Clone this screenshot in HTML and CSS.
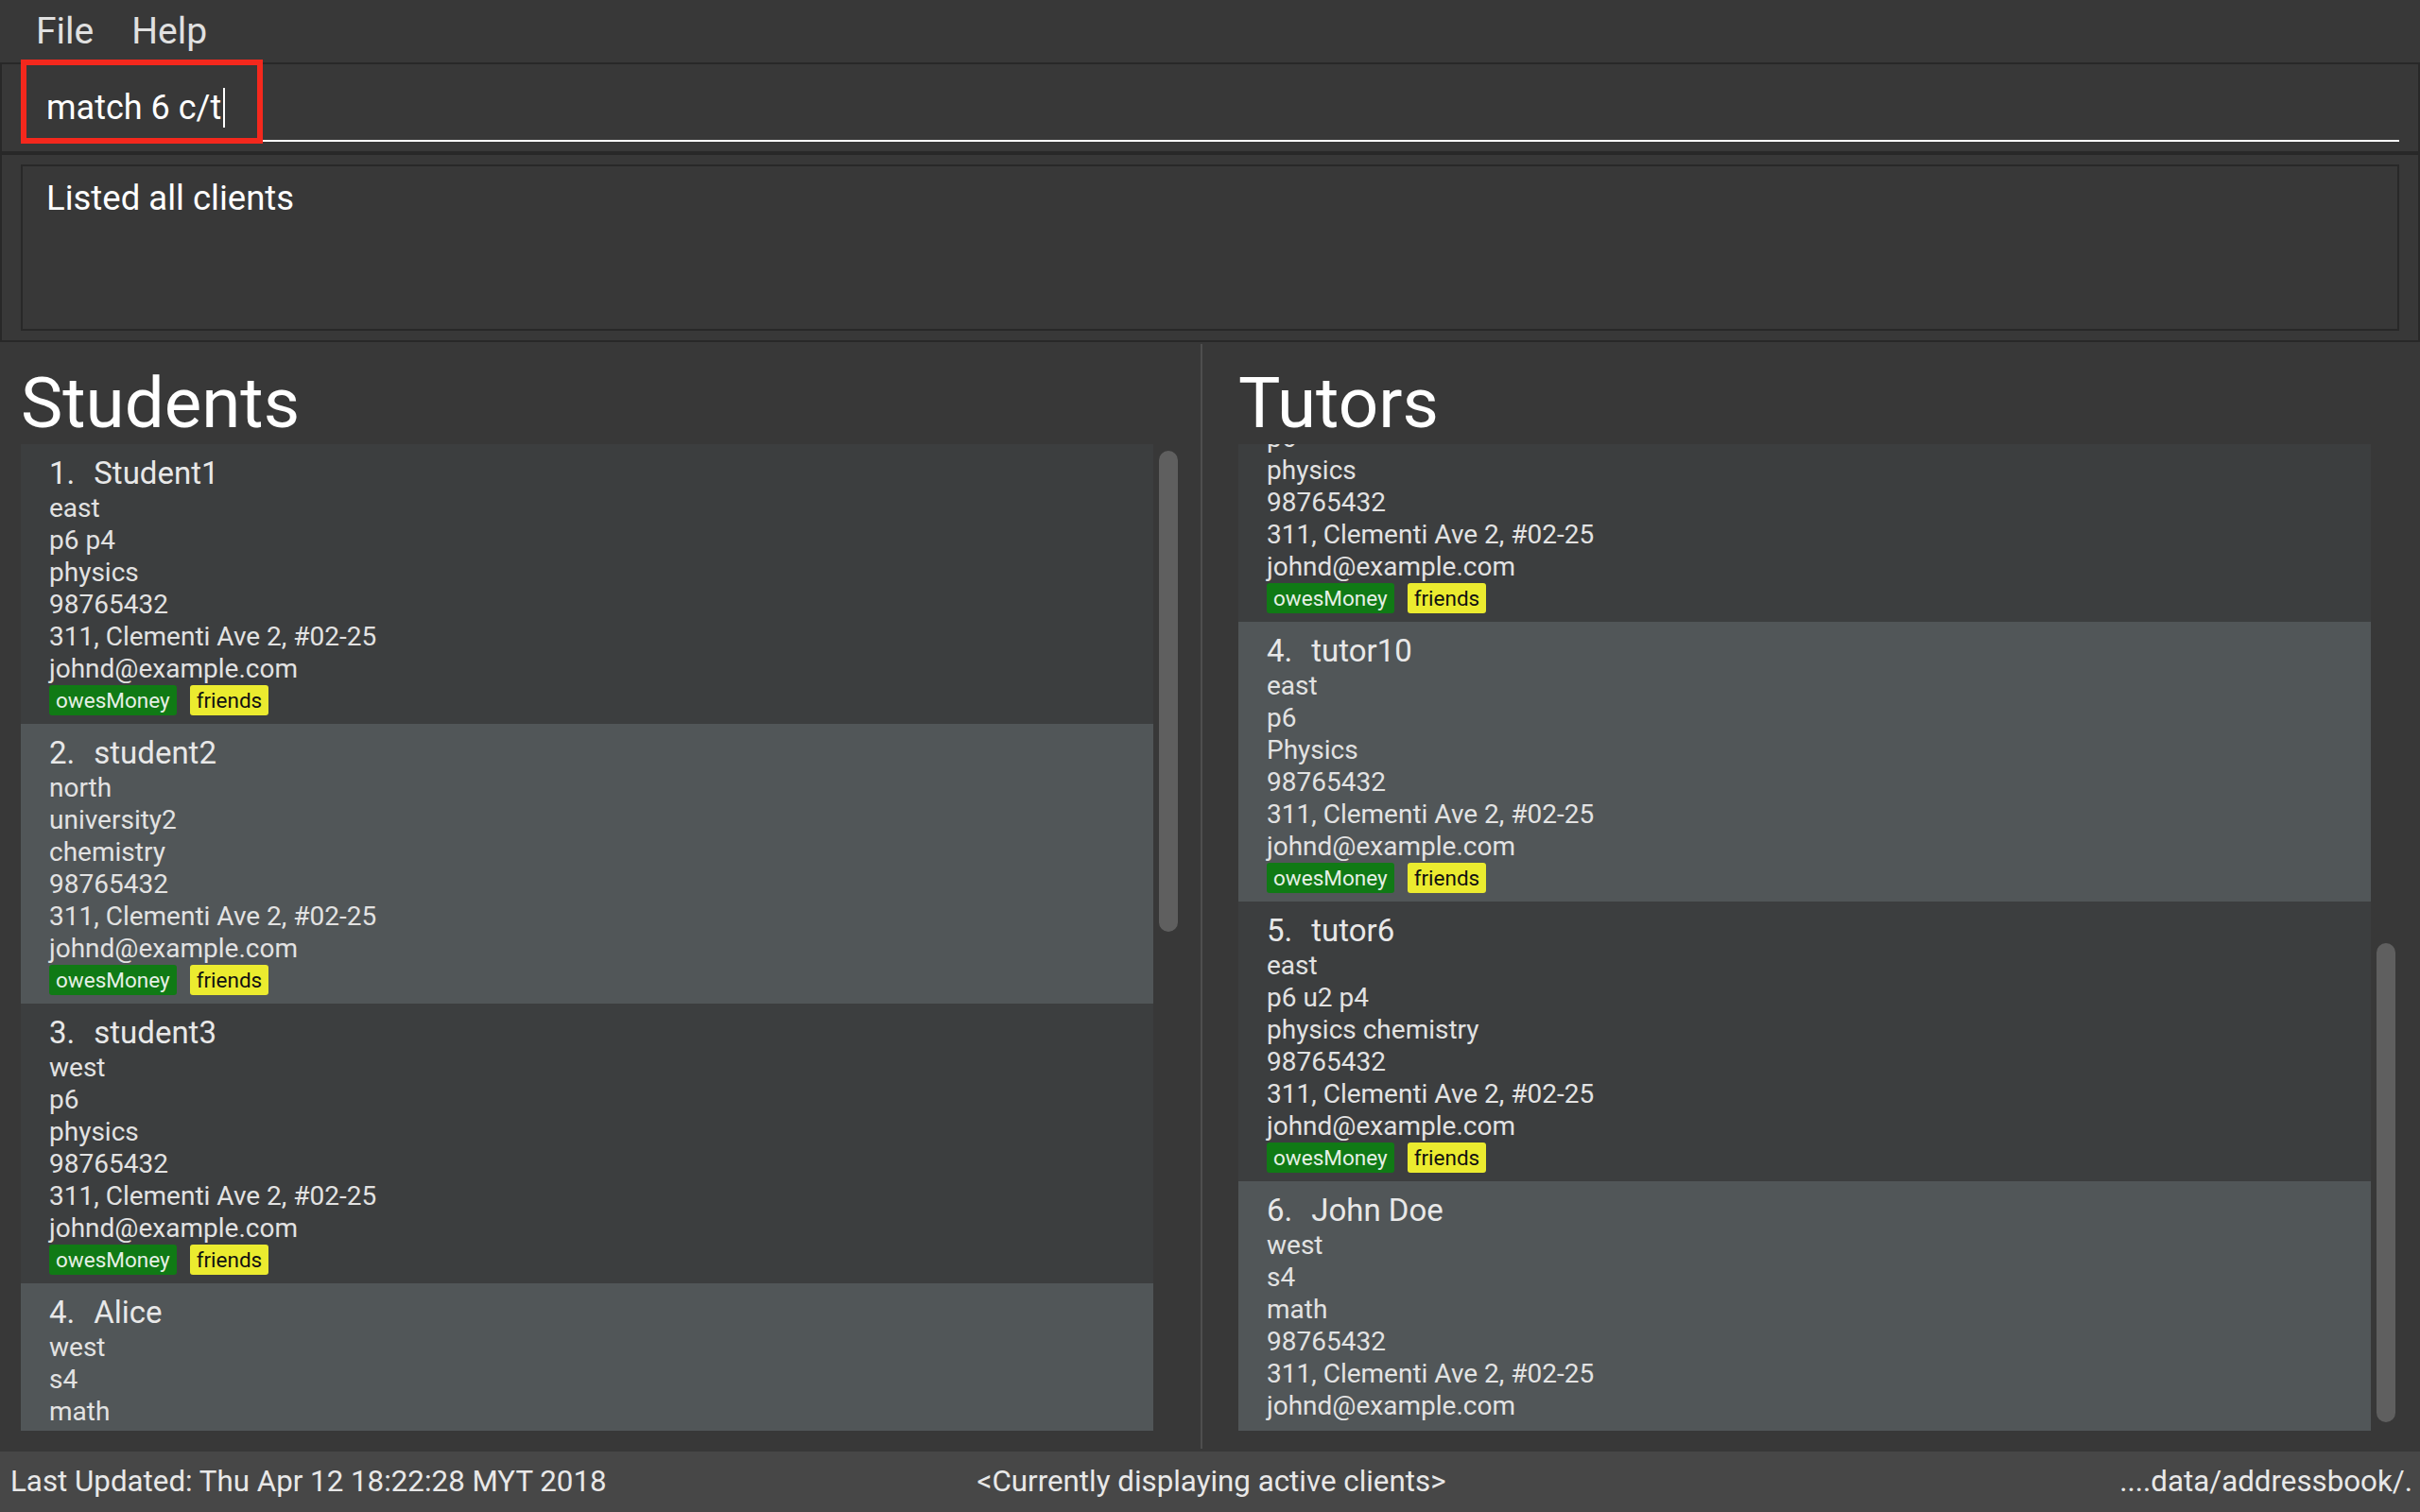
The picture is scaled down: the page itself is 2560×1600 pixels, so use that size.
FILE: index.html
```html
<!DOCTYPE html>
<html lang="en">
<head>
<meta charset="utf-8">
<title>Address App</title>
<link rel="stylesheet" href="styles.css">
</head>
<body>
<div class="app">
  <nav class="menubar">
    <span class="menu-item">File</span>
    <span class="menu-item">Help</span>
  </nav>

  <section class="command-pane">
    <div class="command-field"><span class="command-text">match 6 c/t</span><span class="caret"></span></div>
    <div class="highlight"></div>
  </section>

  <section class="result-pane">
    <div class="result-box">Listed all clients</div>
  </section>

  <main class="lists">
    <section class="pane students">
      <h1 class="pane-title">Students</h1>
      <div class="list-wrap">
        <div class="list">
          <article class="card">
            <div class="card-name"><span class="card-id">1.</span><span>Student1</span></div>
            <div class="card-line">east</div>
            <div class="card-line">p6 p4</div>
            <div class="card-line">physics</div>
            <div class="card-line">98765432</div>
            <div class="card-line">311, Clementi Ave 2, #02-25</div>
            <div class="card-line">johnd@example.com</div>
            <div class="tags"><span class="tag tag-owes">owesMoney</span><span class="tag tag-friends">friends</span></div>
          </article>
          <article class="card">
            <div class="card-name"><span class="card-id">2.</span><span>student2</span></div>
            <div class="card-line">north</div>
            <div class="card-line">university2</div>
            <div class="card-line">chemistry</div>
            <div class="card-line">98765432</div>
            <div class="card-line">311, Clementi Ave 2, #02-25</div>
            <div class="card-line">johnd@example.com</div>
            <div class="tags"><span class="tag tag-owes">owesMoney</span><span class="tag tag-friends">friends</span></div>
          </article>
          <article class="card">
            <div class="card-name"><span class="card-id">3.</span><span>student3</span></div>
            <div class="card-line">west</div>
            <div class="card-line">p6</div>
            <div class="card-line">physics</div>
            <div class="card-line">98765432</div>
            <div class="card-line">311, Clementi Ave 2, #02-25</div>
            <div class="card-line">johnd@example.com</div>
            <div class="tags"><span class="tag tag-owes">owesMoney</span><span class="tag tag-friends">friends</span></div>
          </article>
          <article class="card">
            <div class="card-name"><span class="card-id">4.</span><span>Alice</span></div>
            <div class="card-line">west</div>
            <div class="card-line">s4</div>
            <div class="card-line">math</div>
            <div class="card-line">98765432</div>
            <div class="card-line">311, Clementi Ave 2, #02-25</div>
            <div class="card-line">johnd@example.com</div>
            <div class="tags"><span class="tag tag-owes">owesMoney</span><span class="tag tag-friends">friends</span></div>
          </article>
          <article class="card">
            <div class="card-name"><span class="card-id">5.</span><span>Benson</span></div>
            <div class="card-line">north</div>
            <div class="card-line">s2</div>
            <div class="card-line">english</div>
            <div class="card-line">98765432</div>
            <div class="card-line">311, Clementi Ave 2, #02-25</div>
            <div class="card-line">johnd@example.com</div>
            <div class="tags"><span class="tag tag-owes">owesMoney</span><span class="tag tag-friends">friends</span></div>
          </article>
          <article class="card">
            <div class="card-name"><span class="card-id">6.</span><span>Carl</span></div>
            <div class="card-line">south</div>
            <div class="card-line">j1</div>
            <div class="card-line">biology</div>
            <div class="card-line">98765432</div>
            <div class="card-line">311, Clementi Ave 2, #02-25</div>
            <div class="card-line">johnd@example.com</div>
            <div class="tags"><span class="tag tag-owes">owesMoney</span><span class="tag tag-friends">friends</span></div>
          </article>
          <article class="card">
            <div class="card-name"><span class="card-id">7.</span><span>Daniel</span></div>
            <div class="card-line">central</div>
            <div class="card-line">p5</div>
            <div class="card-line">science</div>
            <div class="card-line">98765432</div>
            <div class="card-line">311, Clementi Ave 2, #02-25</div>
            <div class="card-line">johnd@example.com</div>
            <div class="tags"><span class="tag tag-owes">owesMoney</span><span class="tag tag-friends">friends</span></div>
          </article>
        </div>
        <div class="scrollbar"><div class="thumb"></div></div>
      </div>
    </section>

    <div class="divider"></div>

    <section class="pane tutors">
      <h1 class="pane-title">Tutors</h1>
      <div class="list-wrap">
        <div class="list scrolled-end">
          <article class="card">
            <div class="card-name"><span class="card-id">1.</span><span>tutor1</span></div>
            <div class="card-line">north</div>
            <div class="card-line">p6</div>
            <div class="card-line">math</div>
            <div class="card-line">98765432</div>
            <div class="card-line">311, Clementi Ave 2, #02-25</div>
            <div class="card-line">johnd@example.com</div>
            <div class="tags"><span class="tag tag-owes">owesMoney</span><span class="tag tag-friends">friends</span></div>
          </article>
          <article class="card">
            <div class="card-name"><span class="card-id">2.</span><span>tutor2</span></div>
            <div class="card-line">west</div>
            <div class="card-line">p6</div>
            <div class="card-line">chemistry</div>
            <div class="card-line">98765432</div>
            <div class="card-line">311, Clementi Ave 2, #02-25</div>
            <div class="card-line">johnd@example.com</div>
            <div class="tags"><span class="tag tag-owes">owesMoney</span><span class="tag tag-friends">friends</span></div>
          </article>
          <article class="card">
            <div class="card-name"><span class="card-id">3.</span><span>tutor3</span></div>
            <div class="card-line">east</div>
            <div class="card-line">p6</div>
            <div class="card-line">physics</div>
            <div class="card-line">98765432</div>
            <div class="card-line">311, Clementi Ave 2, #02-25</div>
            <div class="card-line">johnd@example.com</div>
            <div class="tags"><span class="tag tag-owes">owesMoney</span><span class="tag tag-friends">friends</span></div>
          </article>
          <article class="card">
            <div class="card-name"><span class="card-id">4.</span><span>tutor10</span></div>
            <div class="card-line">east</div>
            <div class="card-line">p6</div>
            <div class="card-line">Physics</div>
            <div class="card-line">98765432</div>
            <div class="card-line">311, Clementi Ave 2, #02-25</div>
            <div class="card-line">johnd@example.com</div>
            <div class="tags"><span class="tag tag-owes">owesMoney</span><span class="tag tag-friends">friends</span></div>
          </article>
          <article class="card">
            <div class="card-name"><span class="card-id">5.</span><span>tutor6</span></div>
            <div class="card-line">east</div>
            <div class="card-line">p6 u2 p4</div>
            <div class="card-line">physics chemistry</div>
            <div class="card-line">98765432</div>
            <div class="card-line">311, Clementi Ave 2, #02-25</div>
            <div class="card-line">johnd@example.com</div>
            <div class="tags"><span class="tag tag-owes">owesMoney</span><span class="tag tag-friends">friends</span></div>
          </article>
          <article class="card">
            <div class="card-name"><span class="card-id">6.</span><span>John Doe</span></div>
            <div class="card-line">west</div>
            <div class="card-line">s4</div>
            <div class="card-line">math</div>
            <div class="card-line">98765432</div>
            <div class="card-line">311, Clementi Ave 2, #02-25</div>
            <div class="card-line">johnd@example.com</div>
          </article>
        </div>
        <div class="scrollbar"><div class="thumb"></div></div>
      </div>
    </section>
  </main>

  <footer class="statusbar">
    <span class="status-left">Last Updated: Thu Apr 12 18:22:28 MYT 2018</span>
    <span class="status-center">&lt;Currently displaying active clients&gt;</span>
    <span class="status-right">....data/addressbook/.</span>
  </footer>
</div>
<script src="script.js"></script>
</body>
</html>
```

FILE: styles.css
```css
* {
  box-sizing: border-box;
}

html,
body {
  margin: 0;
  padding: 0;
}

body {
  width: 2560px;
  height: 1600px;
  overflow: hidden;
  background: #383838;
  font-family: Roboto, "Liberation Sans", sans-serif;
  color: #e4e4e4;
}

.app {
  display: flex;
  flex-direction: column;
  height: 1600px;
}

/* Menu bar */
.menubar {
  flex: none;
  height: 66px;
  display: flex;
  align-items: center;
  padding-left: 18px;
}

.menu-item {
  font-size: 39px;
  line-height: 66px;
  padding: 0 20px;
  color: #e0e0e0;
}

/* Command box */
.command-pane {
  position: relative;
  flex: none;
  height: 96px;
  border: 2px solid #282828;
  padding: 12px 20px 10px;
}

.command-field {
  height: 70px;
  border-bottom: 2px solid #ffffff;
  padding-left: 27px;
  font-size: 36px;
  line-height: 68px;
  color: #ffffff;
  white-space: pre;
}

.caret {
  display: inline-block;
  vertical-align: top;
  width: 2px;
  height: 42px;
  margin: 13px 0 0 2px;
  background: #ffffff;
}

.highlight {
  position: absolute;
  left: 20px;
  top: -5px;
  width: 256px;
  height: 89px;
  border: 6px solid #f4281d;
}

/* Result display */
.result-pane {
  flex: none;
  height: 200px;
  border: 2px solid #282828;
  padding: 10px 20px;
}

.result-box {
  height: 176px;
  border: 2px solid #282828;
  padding: 12px 25px 0;
  font-size: 36.5px;
  line-height: 44px;
  color: #ffffff;
}

/* Lists */
.lists {
  flex: 1;
  min-height: 0;
  display: flex;
}

.pane {
  display: flex;
  flex-direction: column;
  min-height: 0;
}

.students {
  flex: none;
  width: 1270px;
  padding: 25px 18px 22px 22px;
}

.tutors {
  flex: 1;
  min-width: 0;
  padding: 25px 20px 22px 38px;
}

.divider {
  flex: none;
  width: 2px;
  margin: 2px 0 3px;
  background: #4e4e4e;
}

.pane-title {
  flex: none;
  height: 80px;
  margin: 0 0 3px;
  font-size: 74.5px;
  line-height: 80px;
  font-weight: 400;
  color: #ffffff;
}

.list-wrap {
  flex: 1;
  min-height: 0;
  display: flex;
}

.list {
  flex: 1;
  min-width: 0;
  overflow: hidden;
}

.scrollbar {
  flex: none;
  width: 32px;
  padding: 0 6px;
}

.thumb {
  width: 20px;
  border-radius: 10px;
  background: #5f5f5f;
}

.students .thumb {
  margin-top: 7px;
  height: 509px;
}

.tutors .thumb {
  margin-top: 528px;
  height: 507px;
}

/* Cards */
.card {
  padding: 11px 30px 9px;
  background: #3c3e3f;
}

.card:nth-child(even) {
  background: #515658;
}

.card-name {
  display: flex;
  font-size: 33px;
  line-height: 40px;
  color: #e8e8e8;
  white-space: nowrap;
}

.card-id {
  margin-right: 20px;
}

.card-line {
  font-size: 28px;
  line-height: 34px;
  color: #e2e2e2;
  white-space: nowrap;
}

.tags {
  display: flex;
  gap: 14px;
  height: 32px;
}

.tag {
  font-size: 22.5px;
  line-height: 32px;
  padding: 0 7px;
  border-radius: 3px;
}

.tag-owes {
  background: #107a15;
  color: #e6f0e6;
}

.tag-friends {
  background: #ebeb2f;
  color: #111111;
}

/* Status bar */
.statusbar {
  flex: none;
  height: 64px;
  display: grid;
  grid-template-columns: 1fr auto 1fr;
  padding: 0 8px 0 11px;
  background: #474747;
  font-size: 31.3px;
  line-height: 64px;
  color: #e8e8e8;
  white-space: nowrap;
}

.status-right {
  justify-self: end;
}
```

FILE: script.js
```js
document.querySelectorAll('.list.scrolled-end').forEach(function (el) {
  el.scrollTop = el.scrollHeight;
});
```
